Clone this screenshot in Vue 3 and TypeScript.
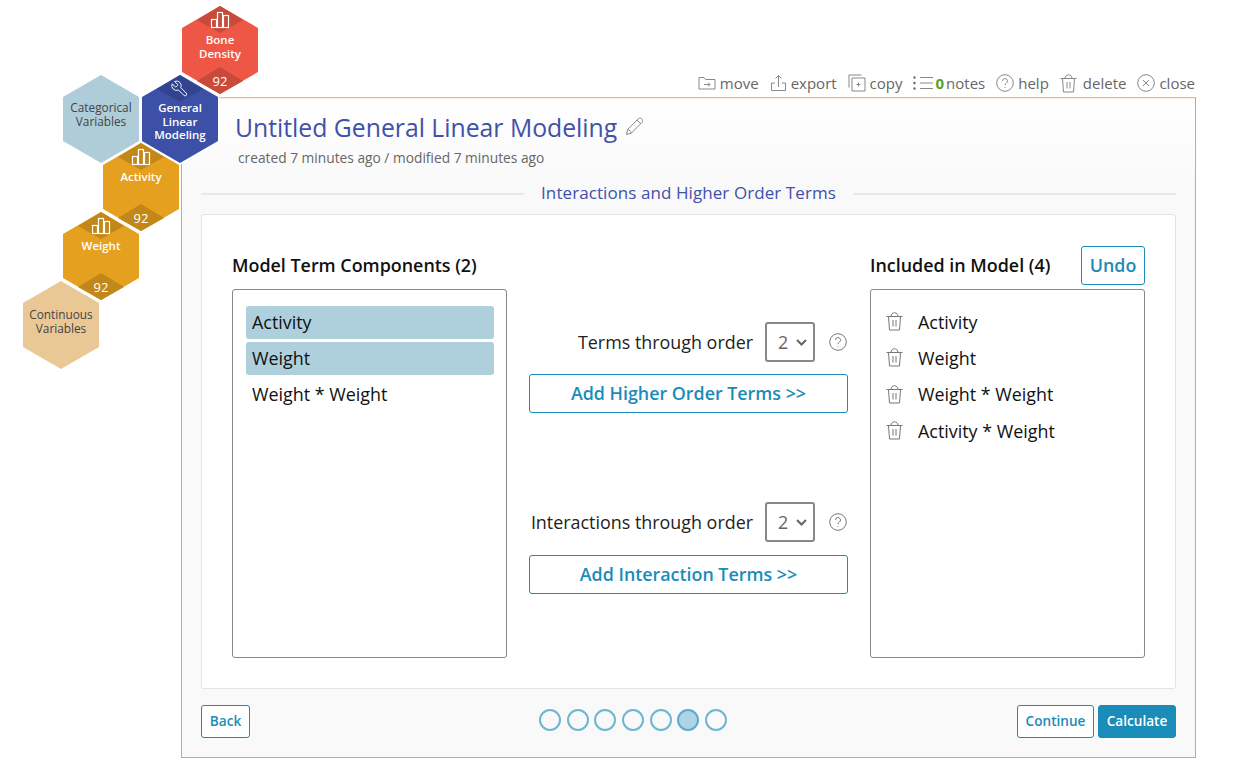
<script setup lang="ts">
interface Hex { id: string; lines: string[]; x: number; y: number; tone: string; icon?: 'chart' | 'wrench'; score?: number }
const hexes: Hex[] = [
  { id: 'bone', lines: ['Bone', 'Density'], x: 180, y: 4, tone: 'red', icon: 'chart', score: 92 },
  { id: 'cat', lines: ['Categorical', 'Variables'], x: 61, y: 73, tone: 'sky' },
  { id: 'glm', lines: ['General', 'Linear', 'Modeling'], x: 140, y: 73, tone: 'blue', icon: 'wrench' },
  { id: 'act', lines: ['Activity'], x: 101, y: 141, tone: 'amber', icon: 'chart', score: 92 },
  { id: 'wei', lines: ['Weight'], x: 61, y: 210, tone: 'amber', icon: 'chart', score: 92 },
  { id: 'con', lines: ['Continuous', 'Variables'], x: 21, y: 279, tone: 'sand' },
]
const dots = [0, 1, 2, 3, 4, 5, 6]
const terms = ['Activity', 'Weight', 'Weight * Weight', 'Activity * Weight']
</script>

<template>
  <div class="page">
    <div class="canvas">
      <div
        v-for="h in hexes"
        :key="h.id"
        class="hex"
        :class="h.tone"
        :style="{ left: h.x + 'px', top: h.y + 'px' }"
      >
        <svg class="hex-bg" viewBox="0 0 80 92" width="80" height="92">
          <polygon class="body" points="40,2 78,24 78,68 40,90 2,68 2,24" />
          <polygon v-if="h.icon" class="dia" points="40,2 63,16 40,29 17,16" />
          <polygon v-if="h.score" class="dia" points="40,63 63,77 40,90 17,77" />
          <g v-if="h.icon === 'chart'" class="ico">
            <rect x="31.5" y="15.5" width="5" height="8" />
            <rect x="37.5" y="8.5" width="5" height="15" />
            <rect x="43.5" y="11.5" width="5" height="12" />
          </g>
          <g v-if="h.icon === 'wrench'" class="ico" transform="translate(49 6.5) scale(-0.78 0.78)">
            <path d="M14.7 6.3a1 1 0 0 0 0 1.4l1.6 1.6a1 1 0 0 0 1.4 0l3.77-3.77a6 6 0 0 1-7.94 7.94l-6.91 6.91a2.12 2.12 0 0 1-3-3l6.91-6.91a6 6 0 0 1 7.94-7.94l-3.76 3.76z" />
          </g>
        </svg>
        <div class="hex-label">
          <div v-for="l in h.lines" :key="l">{{ l }}</div>
        </div>
        <div v-if="h.score" class="hex-score">{{ h.score }}</div>
      </div>
    </div>

    <div class="toolbar">
      <span class="tool">
        <svg width="18" height="18" viewBox="0 0 18 18"><path d="M1 15V3.500h5l1.500 2H17V15z" /><path d="M6 10.500h6M10 8.500l2 2-2 2" /></svg>move
      </span>
      <span class="tool">
        <svg width="17" height="18" viewBox="0 0 17 18"><path d="M5 9H1.500v7.500h14V9H12" /><path d="M8.500 13V1.500M5.500 4.500l3-3 3 3" /></svg>export
      </span>
      <span class="tool">
        <svg width="18" height="18" viewBox="0 0 18 18"><path d="M13.500 1H1v12.500" /><path d="M4 4h13v13H4z" /><path d="M8.500 10.500h4M10.500 8.500v4" /></svg>copy
      </span>
      <span class="tool notes">
        <svg width="20" height="18" viewBox="0 0 20 18"><path d="M7 3.500h13M7 9h13M7 14.500h13" /><path class="dots" d="M1.500 3.500v.1M1.500 9v.1M1.500 14.500v.1" /></svg><b>0</b>notes
      </span>
      <span class="tool">
        <svg width="18" height="18" viewBox="0 0 18 18"><circle cx="9" cy="9" r="8.300" /><path d="M6.500 7a2.500 2.500 0 1 1 3.700 2.200c-.8.500-1.200 1-1.200 2M9 13v.8" /></svg>help
      </span>
      <span class="tool del">
        <svg width="17" height="19" viewBox="0 0 17 19"><path d="M.5 4.500h16M2.500 4.500l1 13.500h10l1-13.500M5 4.500c0-5 7-5 7 0M7 8v6.500M10 8v6.500" /></svg>delete
      </span>
      <span class="tool">
        <svg width="18" height="18" viewBox="0 0 18 18"><circle cx="9" cy="9" r="8.300" /><path d="M6 6l6 6M12 6l-6 6" /></svg>close
      </span>
    </div>

    <div class="card">
      <div class="head">
        <h1 class="title">Untitled General Linear Modeling
          <svg class="pencil" width="19" height="19" viewBox="0 0 19 19"><path d="M1.500 17.500l1.200-5L13.500 1.500c1-.8 3-.5 3.800 1 .6 1.100.4 2-.3 2.800L6.300 16.200zM2.700 12.500c1.500 0 3.300 2 3.600 3.700M12 3l4 4" /></svg>
        </h1>
        <div class="meta">created 7 minutes ago / modified 7 minutes ago</div>
      </div>

      <div class="section"><span>Interactions and Higher Order Terms</span></div>

      <div class="panel">
        <div class="col">
          <div class="col-head"><h2>Model Term Components (2)</h2></div>
          <div class="list left">
            <div class="opt sel">Activity</div>
            <div class="opt sel">Weight</div>
            <div class="opt">Weight * Weight</div>
          </div>
        </div>

        <div class="mid">
          <div class="order first">
            <span>Terms through order</span>
            <div class="select"><span>2</span><svg width="11" height="7" viewBox="0 0 11 7"><path d="M1 1l4.500 4.500L10 1" /></svg></div>
            <svg class="q" width="18" height="18" viewBox="0 0 18 18"><circle cx="9" cy="9" r="8.300" /><path d="M6.500 7a2.500 2.500 0 1 1 3.700 2.200c-.8.500-1.200 1-1.200 2M9 13v.8" /></svg>
          </div>
          <button class="btn wide">Add Higher Order Terms &gt;&gt;</button>
          <div class="order second">
            <span>Interactions through order</span>
            <div class="select"><span>2</span><svg width="11" height="7" viewBox="0 0 11 7"><path d="M1 1l4.500 4.500L10 1" /></svg></div>
            <svg class="q" width="18" height="18" viewBox="0 0 18 18"><circle cx="9" cy="9" r="8.300" /><path d="M6.500 7a2.500 2.500 0 1 1 3.700 2.200c-.8.500-1.200 1-1.200 2M9 13v.8" /></svg>
          </div>
          <button class="btn wide">Add Interaction Terms &gt;&gt;</button>
        </div>

        <div class="col">
          <div class="col-head"><h2>Included in Model (4)</h2><button class="btn undo">Undo</button></div>
          <div class="list right">
            <div v-for="t in terms" :key="t" class="term">
              <svg width="17" height="19" viewBox="0 0 17 19"><path d="M.5 4.500h16M2.500 4.500l1 13.500h10l1-13.500M5 4.500c0-5 7-5 7 0M7 8v6.500M10 8v6.500" /></svg>
              <span>{{ t }}</span>
            </div>
          </div>
        </div>
      </div>

      <div class="foot">
        <button class="btn small back">Back</button>
        <div class="dots-row">
          <i v-for="d in dots" :key="d" class="dot" :class="{ on: d === 5 }"></i>
        </div>
        <div class="foot-right">
          <button class="btn small cont">Continue</button>
          <button class="btn small solid">Calculate</button>
        </div>
      </div>
    </div>
  </div>
</template>

<style>
html, body { margin: 0; background: #fff; }
</style>

<style scoped>
.page {
  position: relative;
  width: 1240px;
  height: 777px;
  overflow: hidden;
  font-family: "Open Sans", "Liberation Sans", sans-serif;
  color: #111;
}
.canvas { position: absolute; inset: 0; z-index: 2; pointer-events: none; }
.hex { position: absolute; width: 80px; height: 92px; text-align: center; }
.hex-bg { position: absolute; left: 0; top: 0; }
.body { stroke: #fff; stroke-width: 3; paint-order: stroke; }
.red .body { fill: #ee5745; } .red .dia { fill: #c84a3b; }
.blue .body { fill: #3c50a8; } .blue .dia { fill: #33448f; }
.amber .body { fill: #e5a01f; } .amber .dia { fill: #c28719; }
.sky .body { fill: #aecdd9; }
.sand .body { fill: #eac895; }
.ico { fill: none; stroke: #fff; stroke-width: 1.2; }
.hex-label {
  position: absolute;
  left: 0; right: 0; top: 29px;
  font-size: 11.5px;
  line-height: 14px;
  color: #fff;
  font-weight: 600;
}
.blue .hex-label { top: 28px; line-height: 13.7px; }
.sky .hex-label, .sand .hex-label { color: #444; font-weight: 400; font-size: 11.8px; }
.sky .hex-label { top: 27px; }
.sand .hex-label { top: 28px; }
.hex-score {
  position: absolute;
  left: 0; right: 0; top: 69px;
  font-size: 13px;
  line-height: 16px;
  color: #fff;
}

.toolbar {
  height: 97px;
  width: 1195px;
  box-sizing: border-box;
  display: flex;
  justify-content: flex-end;
  align-items: flex-end;
  gap: 11px;
  padding-bottom: 4px;
  font-size: 15px;
  line-height: 20px;
  color: #666;
}
.tool { display: flex; align-items: center; gap: 4px; }
.tool svg { fill: none; stroke: #888; stroke-width: 1; }
.tool .dots { stroke-width: 2.400; stroke-linecap: round; stroke: #666; }
.notes { margin-left: -1px; }
.notes b { color: #5e9c2c; font-weight: 700; margin-right: -2px; margin-left: -1px; }
.del { gap: 6px; }

.card {
  margin-left: 181px;
  width: 1015px;
  height: 661px;
  box-sizing: border-box;
  border: 1px solid #e8a63c;
  border-top-color: #efbd72;
  box-shadow: inset 0 1px 0 #fbeed8;
  padding: 0 19px;
  background: linear-gradient(#fff, #f9f9f9 90px);
}
.head { padding: 13px 0 0 34px; height: 74px; box-sizing: border-box; }
.title {
  margin: 0;
  font-size: 24.75px;
  line-height: 34px;
  font-weight: 400;
  color: #3f51a8;
  display: flex;
  align-items: center;
  gap: 8px;
}
.pencil { fill: none; stroke: #888; stroke-width: 1; margin-top: -3px; }
.meta { font-size: 13.75px; line-height: 20px; color: #666; margin: 3px 0 0 3px; }
.section {
  display: flex;
  align-items: center;
  gap: 17px;
  height: 40px;
  margin-top: 2px;
  font-size: 17px;
  letter-spacing: 0.08px;
  color: #3f51a8;
}
.section span { margin-top: -3px; }
.section::before, .section::after { content: ""; flex: 1; height: 2px; background: #e8e8e8; }

.panel {
  box-sizing: border-box;
  height: 475px;
  border: 1px solid #e4e4e4;
  border-radius: 3px;
  background: #fff;
  padding: 31px 30px 30px;
  display: grid;
  grid-template-columns: 275px 319px 275px;
  column-gap: 22px;
}
.col { display: flex; flex-direction: column; }
.col-head {
  height: 39px;
  margin-bottom: 4px;
  display: flex;
  align-items: center;
  justify-content: space-between;
}
h2 { margin: -2px 0 0; font-size: 17.9px; font-weight: 600; color: #111; }
.list {
  box-sizing: border-box;
  height: 369px;
  border: 1px solid #888;
  border-radius: 3px;
  background: #fff;
  font-size: 17.9px;
}
.left { padding: 16px 12px 15px 13px; display: flex; flex-direction: column; gap: 3px; }
.opt { height: 33px; line-height: 33px; padding: 0 6px; border-radius: 3px; }
.opt.sel { background: #aecfdc; }
.right { padding: 15px 15px; display: flex; flex-direction: column; gap: 3px; }
.term { height: 33.300px; display: flex; align-items: center; gap: 15px; }
.term svg { fill: none; stroke: #777; stroke-width: 1; }

.mid { padding-top: 76px; display: flex; flex-direction: column; }
.order {
  height: 40px;
  display: flex;
  align-items: center;
  justify-content: flex-end;
  font-size: 17.9px;
  color: #222;
}
.first { margin-bottom: 12px; }
.second { margin-top: 89px; margin-bottom: 13px; }
.select {
  box-sizing: border-box;
  width: 50px;
  height: 40px;
  margin: 0 14px 0 12px;
  border: 2px solid #888;
  border-radius: 3px;
  display: flex;
  align-items: center;
  gap: 8px;
  padding-left: 11px;
  color: #666;
  background: #fff;
}
.select svg { fill: none; stroke: #666; stroke-width: 2; }
.q { fill: none; stroke: #777; stroke-width: 1; margin-right: 1px; }

.btn {
  font-family: inherit;
  font-weight: 600;
  color: #1a8cba;
  background: #fff;
  border: 1px solid #1a8cba;
  border-radius: 3px;
  padding: 0 0 2px;
  cursor: pointer;
}
.wide { height: 39px; font-size: 17.85px; width: 100%; }
.undo { height: 39px; width: 64px; font-size: 17.85px; padding-bottom: 1px; }
.small { height: 33px; font-size: 13.6px; width: 78px; padding: 0 0 2px; }
.back { width: 49px; }
.cont { width: 77px; }
.solid { background: #1a8cba; color: #fff; }

.foot {
  height: 68px;
  padding-top: 16px;
  box-sizing: border-box;
  display: flex;
  justify-content: space-between;
  align-items: flex-start;
  position: relative;
}
.dots-row {
  position: absolute;
  left: 338px;
  top: 20px;
  display: flex;
  gap: 5.700px;
}
.dot {
  box-sizing: border-box;
  width: 22px;
  height: 22px;
  border: 2px solid #6db5d3;
  border-radius: 50%;
  display: block;
}
.dot.on { background: #aed3e4; border-color: #5aaccd; }
.foot-right { display: flex; gap: 4px; }
</style>
